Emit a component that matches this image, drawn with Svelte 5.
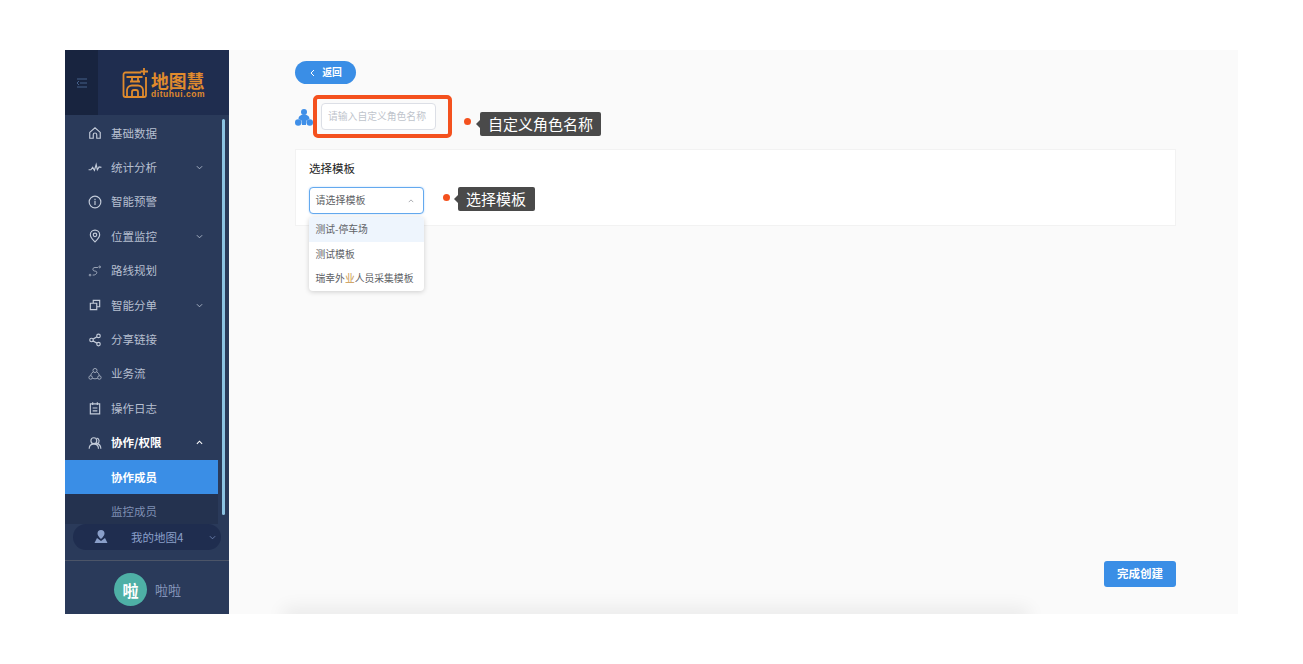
<script>
  const icons = {
    home: 'M3 11 12 3l9 8v10h-6v-6a3 3 0 0 0-6 0v6H3z',
    pulse: 'M1 15l4 0 3-4 3 5 3-10 2 9 3-5 4 1',
    info: 'M12 2a10 10 0 1 0 0 20 10 10 0 0 0 0-20zM12 10v7M12 6.500v2',
    pin: 'M12 2a8 8 0 0 0-8 8c0 5 5 9 8 12 3-3 8-7 8-12a8 8 0 0 0-8-8zM12 7a3 3 0 1 0 0 6 3 3 0 0 0 0-6z',
    route: 'M17 6h-5c-3 0-4 2-3.500 4s3 2 5 2.500 2 3 .5 4.500-3 2-6 2M20 3.500a1.500 1.500 0 1 0 0 3 1.500 1.500 0 0 0 0-3zM3.500 17.500a1.500 1.500 0 1 0 0 3 1.500 1.500 0 0 0 0-3z',
    copy: 'M9 8V4h11v11h-5M4 9h11v11H4z',
    share: 'M18 2a3 3 0 1 0 0 6 3 3 0 0 0 0-6zM6 9a3 3 0 1 0 0 6 3 3 0 0 0 0-6zM18 16a3 3 0 1 0 0 6 3 3 0 0 0 0-6zM8.600 10.500l6.800-4M8.600 13.500l6.800 4',
    flow: 'M12 2.500a3.500 3.500 0 1 0 0 7 3.500 3.500 0 0 0 0-7zM4.500 15a3 3 0 1 0 0 6 3 3 0 0 0 0-6zM19.500 15a3 3 0 1 0 0 6 3 3 0 0 0 0-6zM8.500 8.500Q5 11 4.500 15M15.500 8.500Q19 11 19.500 15M7.500 19.500Q12 21 16.500 19.500',
    log: 'M4 5h16v17H4zM8 2v5M16 2v5M8 12h8M8 17h8',
    team: 'M10 3a5 5 0 1 0 0 10 5 5 0 0 0 0-10zM2 22c0-5 3-8 8-8s8 3 8 8M15 3.500a5 5 0 0 1 1 9.500c3 1 6 4 6 9'
  };

  const menu = [
    { name: '基础数据', icon: 'home' },
    { name: '统计分析', icon: 'pulse', arrow: true },
    { name: '智能预警', icon: 'info' },
    { name: '位置监控', icon: 'pin', arrow: true },
    { name: '路线规划', icon: 'route', dim: true },
    { name: '智能分单', icon: 'copy', arrow: true },
    { name: '分享链接', icon: 'share' },
    { name: '业务流', icon: 'flow', dim: true },
    { name: '操作日志', icon: 'log' },
    { name: '协作/权限', icon: 'team', open: true }
  ];
</script>

<div class="page">
  <div class="frame">
    <aside class="sidebar">
      <header class="brand">
        <button class="toggle" aria-label="收起菜单">
          <svg width="12" height="10" viewBox="0 0 12 10" fill="none" stroke="#44608a" stroke-width="1">
            <path d="M1 1h10M4 5h7M1 9h10M3 3 1 5l2 2" />
          </svg>
        </button>
        <div class="logo">
          <svg class="logo-mark" width="27" height="30" viewBox="0 0 27 30" fill="none" stroke="#e08b2d" stroke-width="1.800">
            <path d="M19 4.500H3.500a2 2 0 0 0-2 2V27a2 2 0 0 0 2 2H22a2 2 0 0 0 2-2V9" />
            <path d="M22 0v7M18.500 3.500h7.500" />
            <path d="M4.500 9h16M8 13.500h10M10 9v4.500M16 9v4.500" />
            <path d="M5 29v-7a5 5 0 0 1 5-4.500h6a5 5 0 0 1 5 4.500v7M10 29v-5a2 2 0 0 1 2-2h2a2 2 0 0 1 2 2v5" />
          </svg>
          <div class="logo-text">
            <span class="logo-cn">地图慧</span>
            <span class="logo-en">dituhui.com</span>
          </div>
        </div>
      </header>

      <nav class="menu">
        {#each menu as item}
          <div class="item" class:open={item.open}>
            <svg class="icon" class:dim={item.dim} viewBox="0 0 24 24" fill="none" stroke="currentColor" stroke-width="2">
              <path d={icons[item.icon]} />
            </svg>
            <span>{item.name}</span>
            {#if item.arrow}
              <svg class="chev" viewBox="0 0 8 5" fill="none" stroke="currentColor"><path d="M1 1l3 3 3-3" /></svg>
            {/if}
            {#if item.open}
              <svg class="chev" viewBox="0 0 8 5" fill="none" stroke="currentColor" stroke-width="1.200"><path d="M1 4l3-3 3 3" /></svg>
            {/if}
          </div>
        {/each}
        <div class="sub active"><span>协作成员</span></div>
        <div class="sub"><span>监控成员</span></div>
      </nav>
      <div class="scrollbar"></div>

      <div class="map-pill">
        <svg width="14" height="14" viewBox="0 0 14 14" fill="#8a9fc9">
          <path d="M7 0a3.500 3.500 0 0 0-3.500 3.500C3.500 6 7 9 7 9s3.500-3 3.500-5.500A3.500 3.500 0 0 0 7 0zM3 8 .5 13h13L11 8 7 11z" />
        </svg>
        <span>我的地图4</span>
        <svg class="pill-chev" viewBox="0 0 8 5" fill="none" stroke="#6f84b3"><path d="M1 1l3 3 3-3" /></svg>
      </div>

      <footer class="user">
        <div class="avatar">啦</div>
        <span>啦啦</span>
      </footer>
    </aside>

    <main class="main">
      <button class="back">
        <svg width="6" height="8" viewBox="0 0 6 8" fill="none" stroke="#fff"><path d="M5 1 2 4l3 3" /></svg>
        <span>返回</span>
      </button>

      <div class="role-row">
        <svg class="role-icon" width="18" height="17" viewBox="0 0 18 17" fill="#3f8fe8">
          <circle cx="9" cy="3" r="3" />
          <path d="M3.500 10c0-3 2.500-4.500 5.500-4.500s5.500 1.500 5.500 4.500l-3 1.500-.5 4.500H7l-.5-4.500z" />
          <circle cx="3.200" cy="13.500" r="3.200" />
          <circle cx="14.800" cy="13.500" r="3.200" />
        </svg>
        <div class="mark-box">
          <div class="fake-input">请输入自定义角色名称</div>
        </div>
        <i class="dot"></i>
        <div class="tip">自定义角色名称</div>
      </div>

      <section class="card">
        <div class="label">选择模板</div>
        <div class="select-row">
          <div class="select-wrap">
            <div class="select">
              <span>请选择模板</span>
              <svg width="6" height="4" viewBox="0 0 8 5" fill="none" stroke="#909399"><path d="M1 4l3-3 3 3" /></svg>
            </div>
            <ul class="dropdown">
              <li class="hover">测试-停车场</li>
              <li>测试模板</li>
              <li>瑞幸外<span class="tint">业</span>人员采集模板</li>
            </ul>
          </div>
          <i class="dot small-gap"></i>
          <div class="tip short">选择模板</div>
        </div>
      </section>

      <button class="finish">完成创建</button>
      <div class="edge-shadow"></div>
    </main>
  </div>
</div>

<style>
  :global(body) {
    margin: 0;
    background: #fff;
    font-family: "Noto Sans CJK SC", "Liberation Sans", sans-serif;
  }
  .page {
    box-sizing: border-box;
    height: 100vh;
    padding: 50px 65px;
  }
  .frame {
    display: flex;
    height: 564px;
    overflow: hidden;
  }

  .sidebar {
    position: relative;
    display: flex;
    flex-direction: column;
    flex: 0 0 164px;
    background: #2a3a5a;
  }
  .brand {
    display: flex;
    flex: 0 0 65px;
    background: #1f2d4f;
  }
  .toggle {
    display: flex;
    align-items: center;
    justify-content: center;
    width: 33px;
    padding: 0;
    border: 0;
    background: #18243f;
  }
  .logo {
    display: flex;
    align-items: flex-start;
    gap: 2px;
    padding: 18px 0 0 24px;
  }
  .logo-text {
    display: flex;
    flex-direction: column;
    padding-top: 3px;
    color: #e08b2d;
  }
  .logo-cn {
    height: 19px;
    font-size: 17.800px;
    font-weight: 700;
    line-height: 19px;
    white-space: nowrap;
  }
  .logo-en {
    font-family: "Liberation Sans", sans-serif;
    font-size: 8.500px;
    font-weight: 700;
    line-height: 9px;
    letter-spacing: 0.550px;
  }

  .menu {
    flex: 0 0 409px;
    width: 153px;
    padding-top: 1px;
    box-sizing: border-box;
    overflow: hidden;
    font-size: 11.500px;
  }
  .item {
    display: flex;
    align-items: center;
    height: 34.400px;
    padding-left: 23px;
    color: #b6bfd0;
    position: relative;
  }
  .item span,
  .sub span {
    margin-bottom: 1px;
  }
  .item.open {
    color: #fff;
    font-weight: 700;
  }
  .icon {
    width: 14px;
    height: 14px;
    margin-right: 9px;
    color: #c3cbd9;
  }
  .icon.dim {
    color: #aab3c4;
    stroke-width: 1.500;
  }
  .chev {
    position: absolute;
    left: 131px;
    width: 7px;
    height: 5px;
  }
  .sub {
    display: flex;
    align-items: center;
    height: 34.400px;
    padding-left: 46px;
    background: #24324f;
    color: #7f8fb3;
  }
  .sub.active {
    background: #3a8ee6;
    color: #fff;
    font-weight: 700;
  }
  .scrollbar {
    position: absolute;
    top: 69px;
    left: 157px;
    width: 3px;
    height: 396px;
    border-radius: 2px;
    background: #8cc3e3;
  }

  .map-pill {
    position: relative;
    display: flex;
    align-items: center;
    flex: 0 0 26px;
    margin: 0 8px;
    padding-left: 21px;
    border-radius: 13px;
    background: #1f2d4f;
    color: #8a9fc9;
    font-size: 11.500px;
  }
  .map-pill span {
    margin: 0 0 1px 23px;
  }
  .pill-chev {
    position: absolute;
    right: 5px;
    top: 11px;
    width: 7px;
    height: 5px;
  }

  .user {
    display: flex;
    align-items: center;
    justify-content: center;
    gap: 8px;
    flex: 1;
    margin-top: 10px;
    padding: 4px 0 0 1px;
    border-top: 1px solid #4c5568;
    color: #8595bb;
    font-size: 13px;
  }
  .avatar {
    display: flex;
    align-items: center;
    justify-content: center;
    width: 33px;
    height: 33px;
    border-radius: 50%;
    background: #4eb0a6;
    color: #fff;
    font-size: 16px;
    font-weight: 700;
  }

  .main {
    position: relative;
    display: flex;
    flex-direction: column;
    align-items: flex-start;
    flex: 1;
    box-sizing: border-box;
    padding: 11px 62px 27px 66px;
    background: #fafafa;
  }
  .back {
    display: flex;
    align-items: center;
    justify-content: center;
    gap: 7px;
    width: 61px;
    height: 23px;
    padding: 0;
    border: 0;
    border-radius: 12px;
    background: #3a8ee6;
    color: #fff;
    font: 700 9.800px "Noto Sans CJK SC", sans-serif;
  }
  .back span {
    margin-bottom: 1px;
  }
  .role-row {
    display: flex;
    align-items: center;
    margin-top: 11px;
  }
  .role-icon {
    margin-top: 1px;
  }
  .mark-box {
    padding: 4px 12px 4px 4px;
    border: 4px solid #f4511e;
    border-radius: 5px;
  }
  .fake-input {
    box-sizing: border-box;
    display: flex;
    align-items: center;
    width: 115px;
    height: 27px;
    padding: 0 0 1px 6px;
    border: 1px solid #dcdfe6;
    border-radius: 4px;
    background: #fff;
    color: #c0c4cc;
    font-size: 9.800px;
    white-space: nowrap;
  }
  .dot {
    width: 7px;
    height: 7px;
    margin: 10px 0 0 12px;
    border-radius: 50%;
    background: #f4511e;
  }
  .dot.small-gap {
    margin: 0 0 6px 19px;
  }
  .tip {
    position: relative;
    box-sizing: border-box;
    display: flex;
    align-items: center;
    height: 24px;
    margin: 15px 0 0 9px;
    padding: 0 8px 2px;
    border-radius: 2px;
    background: #4a4a4a;
    color: #fff;
    font-size: 15px;
    white-space: nowrap;
  }
  .tip.short {
    margin: 0 0 3px 8px;
    padding: 0 9px 2px 8px;
    font-size: 15px;
  }
  .tip::before {
    content: "";
    position: absolute;
    left: -4px;
    top: 8px;
    border: 4px solid transparent;
    border-left: 0;
    border-right-color: #4a4a4a;
  }

  .card {
    align-self: stretch;
    box-sizing: border-box;
    height: 77px;
    margin-top: 11px;
    padding: 11px 13px;
    border: 1px solid #f2f2f2;
    background: #fff;
  }
  .label {
    color: #222;
    font-size: 11.500px;
    line-height: 14px;
  }
  .select-row {
    display: flex;
    align-items: center;
    margin-top: 12px;
  }
  .select-wrap {
    position: relative;
  }
  .select {
    box-sizing: border-box;
    display: flex;
    align-items: center;
    justify-content: space-between;
    width: 115px;
    height: 27px;
    padding: 0 9px 0 5.500px;
    border: 1px solid #64a9ee;
    border-radius: 4px;
    box-shadow: 0 0 2px rgba(64, 158, 255, 0.4);
    background: #fff;
    color: #606266;
    font-size: 10px;
  }
  .select span {
    margin-bottom: 2px;
  }
  .dropdown {
    position: absolute;
    top: 30px;
    left: 0;
    z-index: 2;
    width: 115px;
    margin: 0;
    padding: 0;
    overflow: hidden;
    list-style: none;
    border-radius: 4px;
    background: #fff;
    box-shadow: 0 1px 5px rgba(0, 0, 0, 0.18);
    color: #606266;
    font-size: 9.800px;
    white-space: nowrap;
  }
  .dropdown li {
    display: flex;
    align-items: center;
    height: 24.500px;
    padding-left: 6.500px;
  }
  .dropdown li.hover {
    background: #eef5fd;
  }
  .tint {
    color: #c9964a;
  }

  .finish {
    align-self: flex-end;
    width: 72px;
    height: 26px;
    margin-top: auto;
    padding: 0 0 2px;
    border: 0;
    border-radius: 3px;
    background: #3a8ee6;
    color: #fff;
    font: 700 11.500px "Noto Sans CJK SC", sans-serif;
  }
  .edge-shadow {
    position: absolute;
    left: 60px;
    right: 215px;
    bottom: -6px;
    height: 6px;
    box-shadow: 0 0 18px 6px rgba(0, 0, 0, 0.07);
  }
</style>
